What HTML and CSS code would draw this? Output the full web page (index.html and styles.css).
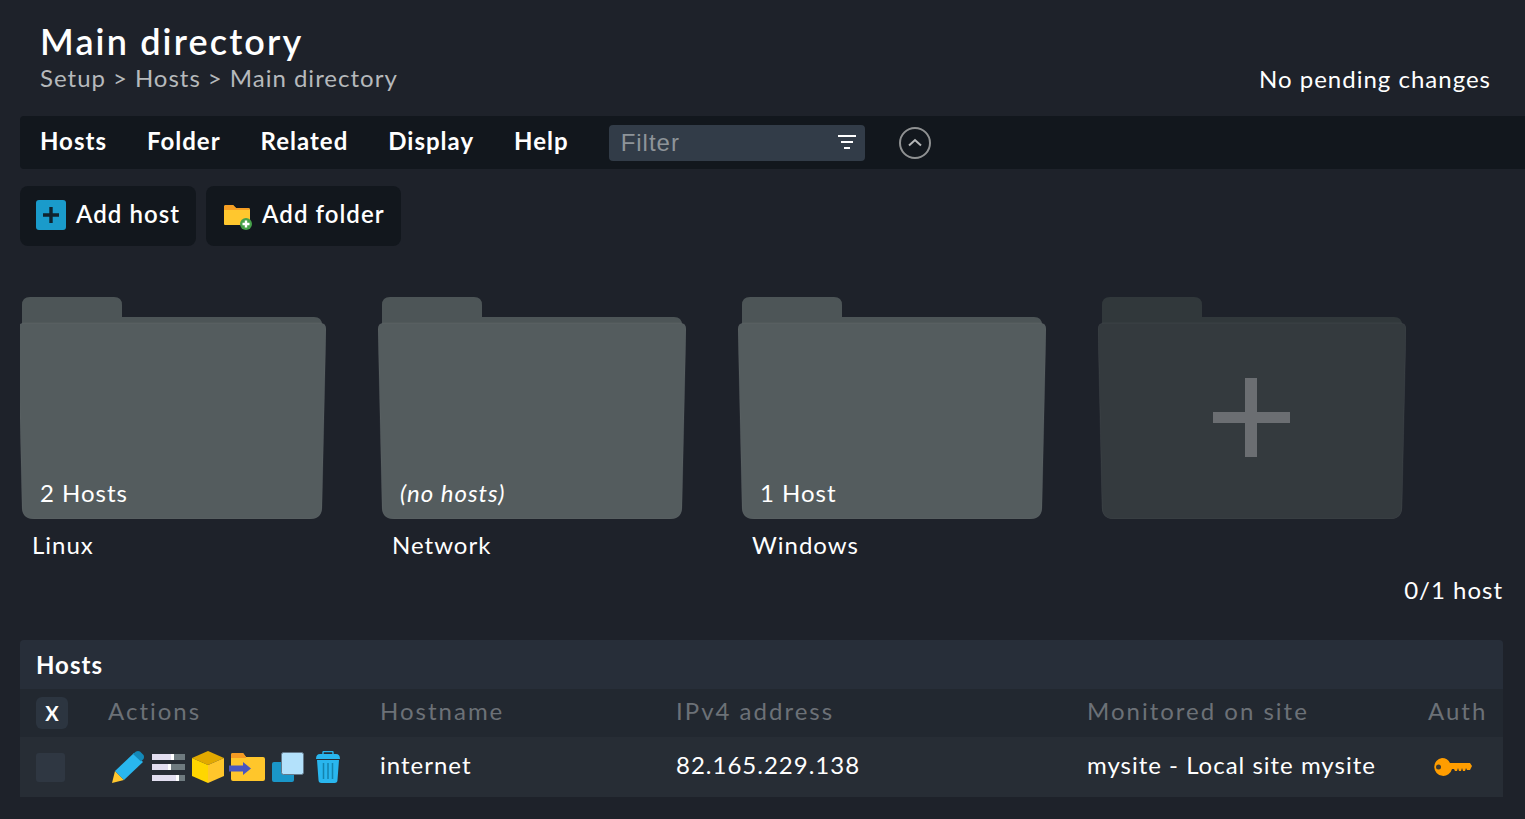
FILE: index.html
```html
<!DOCTYPE html>
<html lang="en">

<head>
    <meta charset="UTF-8">
    <meta name="viewport" content="width=device-width, initial-scale=1.0">
    <title>Main directory</title>
    <link rel="stylesheet" href="styles.css">
</head>

<body>
    <header class="top">
        <div>
            <h1>Main directory</h1>
            <p class="crumbs"><span>Setup</span><span>&gt;</span><span>Hosts</span><span>&gt;</span><span>Main directory</span></p>
        </div>
        <p class="pending">No pending changes</p>
    </header>

    <nav class="menubar">
        <ul class="menu">
            <li>Hosts</li>
            <li>Folder</li>
            <li>Related</li>
            <li>Display</li>
            <li>Help</li>
        </ul>
        <div class="filter">
            <input class="filter-input" type="text" placeholder="Filter">
            <svg class="filter-icon" width="18" height="16" viewBox="0 0 18 16">
                <rect x="0" y="0" width="18" height="2" fill="#fff" />
                <rect x="3" y="6" width="12" height="2" fill="#fff" />
                <rect x="6" y="12" width="6" height="2" fill="#fff" />
            </svg>
        </div>
        <svg class="collapse" width="32" height="32" viewBox="0 0 32 32" fill="none" stroke="#8f9192" stroke-width="2">
            <circle cx="16" cy="16" r="15" />
            <path d="M10 18.500 L16 13 L22 18.500" stroke="#b5b7b8" />
        </svg>
    </nav>

    <div class="actions">
        <a class="action">
            <svg width="30" height="30" viewBox="0 0 30 30">
                <rect width="30" height="30" rx="3" fill="#1a9bcb" />
                <path d="M15 7v16M7 15h16" stroke="#10232e" stroke-width="3.400" />
            </svg>
            <span class="action-text">Add host</span>
        </a>
        <a class="action">
            <svg width="30" height="30" viewBox="0 0 30 30">
                <path d="M2 7q0-2 2-2h7l3 3h12q2 0 2 2v14q0 1-1 1H3q-1 0-1-1z" fill="#ffc72e" />
                <path d="M2 9V7q0-2 2-2h7l3 3h12q2 0 2 2H2z" fill="#f59e23" />
                <circle cx="24" cy="24" r="6" fill="#46a14a" />
                <path d="M24 20.500v7M20.500 24h7" stroke="#fff" stroke-width="2.400" />
            </svg>
            <span class="action-text">Add folder</span>
        </a>
    </div>

    <div class="folders">
        <div class="folder-item">
            <div class="folder">
                <svg class="folder-shape" width="308" height="222" viewBox="0 0 308 222">
                    <path d="M4 30V8q0-8 8-8h84q8 0 8 8v12h192q8 0 8 8v10H4z" fill="#4d5557" />
                    <path class="folder-front" d="M0 32q0-6 6-6h296q6 0 6 6l-4 178q0 12-12 12H16q-12 0-12-12z" fill="#545c5e" />
                </svg>
                <span class="count">2 Hosts</span>
            </div>
            <p class="folder-name">Linux</p>
        </div>
        <div class="folder-item">
            <div class="folder">
                <svg class="folder-shape" width="308" height="222" viewBox="0 0 308 222">
                    <path d="M4 30V8q0-8 8-8h84q8 0 8 8v12h192q8 0 8 8v10H4z" fill="#4d5557" />
                    <path class="folder-front" d="M0 32q0-6 6-6h296q6 0 6 6l-4 178q0 12-12 12H16q-12 0-12-12z" fill="#545c5e" />
                </svg>
                <span class="count count-none">(no hosts)</span>
            </div>
            <p class="folder-name">Network</p>
        </div>
        <div class="folder-item">
            <div class="folder">
                <svg class="folder-shape" width="308" height="222" viewBox="0 0 308 222">
                    <path d="M4 30V8q0-8 8-8h84q8 0 8 8v12h192q8 0 8 8v10H4z" fill="#4d5557" />
                    <path class="folder-front" d="M0 32q0-6 6-6h296q6 0 6 6l-4 178q0 12-12 12H16q-12 0-12-12z" fill="#545c5e" />
                </svg>
                <span class="count">1 Host</span>
            </div>
            <p class="folder-name">Windows</p>
        </div>
        <div class="folder-item">
            <div class="folder">
                <svg class="folder-shape" width="308" height="222" viewBox="0 0 308 222">
                    <path d="M4 30V8q0-8 8-8h84q8 0 8 8v12h192q8 0 8 8v10H4z" fill="#31383b" />
                    <path class="folder-front" d="M0 32q0-6 6-6h296q6 0 6 6l-4 178q0 12-12 12H16q-12 0-12-12z" fill="#343a3e" />
                    <path d="M147 81h12v79h-12zM115 115h77v11h-77z" fill="#6b6e72" />
                </svg>
            </div>
        </div>
    </div>

    <p class="host-count">0/1 host</p>

    <section class="hosts">
        <h2>Hosts</h2>
        <table>
            <colgroup>
                <col class="c-check">
                <col class="c-actions">
                <col class="c-name">
                <col class="c-ip">
                <col class="c-site">
                <col class="c-auth">
            </colgroup>
            <tr>
                <th class="cell-box"><span class="toggle">X</span></th>
                <th>Actions</th>
                <th>Hostname</th>
                <th>IPv4 address</th>
                <th>Monitored on site</th>
                <th>Auth</th>
            </tr>
            <tr class="row">
                <td class="cell-box"><span class="check"></span></td>
                <td class="cell-box">
                    <div class="icons">
                        <!-- pencil -->
                        <svg class="i-pencil" width="32" height="32" viewBox="0 0 32 32">
                            <path d="M0 32 L3 20 L12 29z" fill="#ffc72e" />
                            <path d="M3 20 L22 2 L31 11 L12 29z" fill="#29b6ee" />
                            <path d="M21 3 L24 0.500q2-1 4 0l3.500 3.500q1 2 0 4L29 10.500z" fill="#1388b8" />
                        </svg>
                        <!-- sliders -->
                        <svg width="33" height="27" viewBox="0 0 33 27">
                            <path d="M0 0h33v6H0zM0 10h33v6H0zM0 21h33v6H0z" fill="#6f7b80" />
                            <path d="M0 0h20v6H0zM0 10h17v6H0zM0 21h25v6H0z" fill="#e2def0" />
                            <path d="M19 0h3v6h-3zM16 10h3v6h-3zM24 21h3v6h-3z" fill="#fff" />
                        </svg>
                        <!-- cube -->
                        <svg width="32" height="32" viewBox="0 0 32 32">
                            <path d="M16 0L32 7 16 14 0 7z" fill="#e2a900" />
                            <path d="M0 7L16 14V32L0 25z" fill="#ffd600" />
                            <path d="M32 7L16 14V32L32 25z" fill="#ffc62b" />
                        </svg>
                        <!-- folder with arrow -->
                        <svg class="i-move" width="36" height="28" viewBox="0 0 36 28">
                            <path d="M2 2q0-2 2-2h10l3 4h17q2 0 2 2v20q0 2-2 2H4q-2 0-2-2z" fill="#ffc62b" />
                            <path d="M2 5V2q0-2 2-2h10l3 4v1z" fill="#f59a23" />
                            <path d="M0 12.500h14V9l8 6.500-8 6.500v-3.500H0z" fill="#4a56c0" />
                        </svg>
                        <!-- clone -->
                        <svg width="32" height="30" viewBox="0 0 32 30">
                            <path d="M2 10h20v18q0 2-2 2H2q-2 0-2-2V12q0-2 2-2z" fill="#1a96c8" />
                            <rect x="9.500" y="0.500" width="22" height="22" rx="2" fill="#b3e1fb" stroke="#64798a" />
                        </svg>
                        <!-- trash -->
                        <svg class="i-trash" width="24" height="32" viewBox="0 0 24 32">
                            <path d="M7 3V1.500q0-1 1-1h8q1 0 1 1V3" fill="none" stroke="#29b6ee" stroke-width="1.400" />
                            <path d="M0 8q0-5 4-5h16q4 0 4 5z" fill="#29b6ee" />
                            <path d="M1 9h22l-1.500 20q0 3-3 3H5.500q-3 0-3-3z" fill="#29b6ee" />
                            <path d="M7.500 12v16M12 12v16M16.500 12v16" stroke="#1483ad" stroke-width="1.500" />
                        </svg>
                    </div>
                </td>
                <td>internet</td>
                <td>82.165.229.138</td>
                <td>mysite - Local site mysite</td>
                <td class="cell-box">
                    <svg class="key" width="39" height="18" viewBox="0 0 39 18">
                        <path d="M9 0a9 9 0 0 1 8 5H37l2 3-2 4h-3l-1-2-1 3h-2l-1-3-1 3h-2l-1-3-1 3h-2l-1-2h-2a9 9 0 1 1-10-11z" fill="#ff9d00" />
                        <circle cx="5.500" cy="9" r="2.500" fill="#3d3a30" />
                    </svg>
                </td>
            </tr>
        </table>
    </section>
</body>

</html>
```

FILE: styles.css
```css
* {
    padding: 0;
    margin: 0;
    box-sizing: border-box;
}

body {
    background-color: #1e222a;
    color: #fff;
    font-family: Lato, "Open Sans", sans-serif;
    font-size: 24px;
    letter-spacing: 1px;
    overflow: hidden;
}

.top {
    display: flex;
    justify-content: space-between;
    align-items: flex-end;
    height: 116px;
    padding: 17px 34px 23px 40px;
}

h1 {
    font-size: 36px;
    font-weight: 600;
    line-height: 44px;
    letter-spacing: 2.150px;
}

.crumbs {
    display: flex;
    gap: 7px;
    color: #b6b9bc;
    line-height: 30px;
}

.pending {
    line-height: 30px;
    margin-bottom: -1px;
}

.menubar {
    display: flex;
    align-items: center;
    height: 53px;
    margin-left: 20px;
    background-color: #12171d;
    border-radius: 4px 0 0 4px;
    padding-left: 20px;
}

.menu {
    display: flex;
    gap: 40px;
    list-style: none;
    font-weight: 700;
    line-height: 50px;
    margin-bottom: 3px;
}

.filter {
    display: flex;
    align-items: center;
    justify-content: space-between;
    width: 256px;
    height: 36px;
    margin-left: 40px;
    padding: 0 9px 0 12px;
    background-color: #323c48;
    border-radius: 4px;
}

.filter-input {
    width: 180px;
    border: 0;
    outline: 0;
    background: none;
    font-family: "Liberation Sans", Arial, sans-serif;
    font-size: 24px;
    letter-spacing: 1px;
}

.filter-input::placeholder {
    color: #8e9499;
    opacity: 1;
}

.collapse {
    margin-left: 34px;
}

.actions {
    display: flex;
    gap: 10px;
    margin: 17px 0 0 20px;
}

.action {
    display: flex;
    align-items: center;
    gap: 10px;
    height: 60px;
    padding: 0 16px 2px;
    background-color: #12171d;
    border-radius: 8px;
    font-weight: 600;
    letter-spacing: 1.050px;
}

.action-text {
    padding-bottom: 4px;
}

.folders {
    display: flex;
    margin: 51px 0 0 20px;
    overflow: hidden;
}

.folder-item {
    flex: 0 0 360px;
}

.folder {
    position: relative;
    display: flex;
    align-items: flex-end;
    width: 308px;
    height: 222px;
    margin-left: -2px;
    padding: 0 0 11px 22px;
}

.folder-shape {
    position: absolute;
    top: 0;
    left: 0;
    filter: blur(0.600px);
}

.folder-front {
    stroke: rgba(255, 255, 255, 0.05);
}

.count {
    position: relative;
    line-height: 30px;
}

.count-none {
    font-style: italic;
}

.folder-name {
    padding: 11px 0 0 12px;
    line-height: 30px;
}

.host-count {
    margin: 15px 22px 0 0;
    text-align: right;
    line-height: 30px;
}

.hosts {
    margin: 35px 22px 0 20px;
    background-color: #222830;
    border-radius: 4px;
}

h2 {
    height: 49px;
    padding-left: 16px;
    background-color: #272e39;
    border-radius: 4px 4px 0 0;
    font-size: 24px;
    font-weight: 700;
    line-height: 49px;
}

table {
    width: 100%;
    table-layout: fixed;
    border-collapse: collapse;
}

.c-check { width: 72px; }
.c-actions { width: 272px; }
.c-name { width: 296px; }
.c-ip { width: 411px; }
.c-site { width: 341px; }

th {
    height: 48px;
    padding: 0 0 6px 16px;
    text-align: left;
    font-weight: 400;
    color: #6c7177;
    letter-spacing: 2px;
}

td {
    height: 60px;
    padding: 0 0 6px 16px;
}

.row {
    background-color: #272d35;
}

th.cell-box,
td.cell-box {
    padding-bottom: 0;
}

.toggle {
    display: block;
    width: 32px;
    height: 32px;
    border-radius: 6px;
    background-color: #2c3540;
    color: #fff;
    font-weight: 700;
    font-size: 20px;
    line-height: 32px;
    text-align: center;
    letter-spacing: 0;
}

.check {
    display: block;
    width: 29px;
    height: 29px;
    border-radius: 3px;
    background-color: #2f3742;
}

.icons {
    display: flex;
    align-items: center;
    padding-left: 4px;
    gap: 7px;
}

.i-pencil {
    margin-right: 1px;
}

.i-move {
    margin-left: -2px;
}

.i-trash {
    margin-left: 5px;
}

.key {
    display: block;
    margin-left: 5px;
}
```
